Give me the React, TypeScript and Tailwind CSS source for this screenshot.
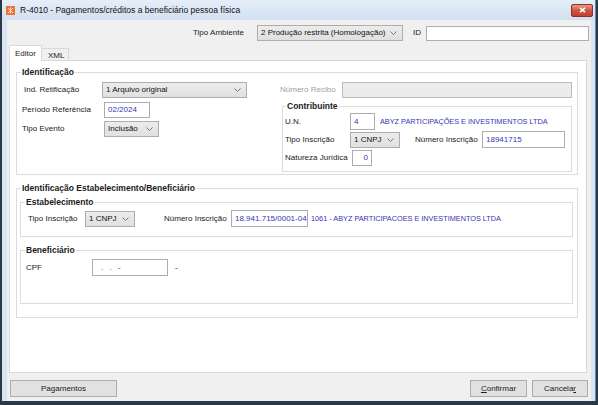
import React from 'react';

const FONT = "font-['Liberation_Sans',Arial,sans-serif]";

function Chevron() {
  return (
    <svg width="7" height="4" viewBox="0 0 7 4" className="shrink-0">
      <path d="M0.5 0.5 L3.5 3.5 L6.5 0.5" fill="none" stroke="#6b6b6b" strokeWidth="0.9" />
    </svg>
  );
}

function Select({ className, text }: { className: string; text: string }) {
  return (
    <div
      className={`flex shrink-0 items-center justify-between border border-[#adadad] bg-gradient-to-b from-[#ececec] to-[#e0e0e0] pl-[3px] pr-[5px] text-[8px] leading-[10px] text-[#111] ${className}`}
    >
      <span className="whitespace-nowrap">{text}</span>
      <Chevron />
    </div>
  );
}

function Input({ className, text = '', right = false }: { className: string; text?: string; right?: boolean }) {
  return (
    <div
      className={`flex shrink-0 items-center border border-[#abadb3] bg-white px-[3px] text-[8px] leading-[10px] text-[#3535b5] ${right ? 'justify-end' : ''} ${className}`}
    >
      <span className="whitespace-nowrap">{text}</span>
    </div>
  );
}

function Label({ className, children, gray = false }: { className: string; children: React.ReactNode; gray?: boolean }) {
  return (
    <div className={`shrink-0 whitespace-nowrap text-[8px] leading-[10px] ${gray ? 'text-[#a0a0a0]' : 'text-[#1a1a1a]'} ${className}`}>
      {children}
    </div>
  );
}

function Group({ title, className, children }: { title: string; className: string; children: React.ReactNode }) {
  return (
    <fieldset className={`min-w-0 border border-[#dcdcdc] ${className}`}>
      <legend className="ml-[4px] px-[1px] text-[8.5px] font-bold leading-[10px] text-[#1a1a1a]">{title}</legend>
      {children}
    </fieldset>
  );
}

function Button({ className, children }: { className: string; children: React.ReactNode }) {
  return (
    <div
      className={`flex h-[17px] shrink-0 items-center justify-center border border-[#adadad] bg-[#e1e1e1] text-[8px] leading-[10px] text-[#1a1a1a] ${className}`}
    >
      {children}
    </div>
  );
}

export default function App() {
  return (
    <div className={`h-[405px] w-[598px] overflow-hidden bg-[#2b3846] pl-[2px] ${FONT}`}>
      <div className="flex h-[401px] w-[594px] flex-col border-r border-[#5b86bf] bg-[#d9e5f3]">
        {/* Title bar */}
        <div className="flex h-[20px] shrink-0 items-center bg-gradient-to-b from-[#e6eef8] to-[#d2e0f1] pl-[4px] pr-[2px]">
          <div className="flex h-[9px] w-[9px] items-center justify-center bg-[#f0703a]">
            <svg width="7" height="7" viewBox="0 0 7 7">
              <path d="M1 1 L6 6 M6 1 L1 6 M3.5 0.5 L3.5 6.5" stroke="#ffe6d8" strokeWidth="0.9" />
            </svg>
          </div>
          <div className="ml-[5px] whitespace-nowrap text-[8.5px] leading-[10px] text-[#111]">
            R-4010 - Pagamentos/créditos a beneficiário pessoa física
          </div>
          <div className="ml-auto flex h-[13px] w-[22px] items-center justify-center rounded-[2px] border border-[#8b3327] bg-gradient-to-b from-[#e59a8b] via-[#d0533f] to-[#c0402d]">
            <svg width="7" height="6" viewBox="0 0 7 6">
              <path d="M1 0.8 L6 5.2 M6 0.8 L1 5.2" stroke="#fff" strokeWidth="1.6" />
            </svg>
          </div>
        </div>

        {/* Client area */}
        <div className="mx-[5px] flex h-[381px] w-[584px] flex-col bg-[#f0f0f0]">
          {/* Top row */}
          <div className="mt-[5px] flex h-[16px] items-center pl-[186px]">
            <Label className="w-[64px]">Tipo Ambiente</Label>
            <Select className="h-[16px] w-[146px]" text="2 Produção restrita (Homologação)" />
            <Label className="ml-[10px] w-[13px]">ID</Label>
            <Input className="h-[15px] w-[163px]" />
          </div>

          {/* Tabs */}
          <div className="mt-[4px] -mb-px ml-[2px] flex h-[16px] items-end">
            <div className="relative z-10 flex h-[16px] w-[33px] items-start border border-b-0 border-[#d9d9d9] bg-white pl-[5px] pt-[3px] text-[8px] leading-[10px] text-[#1a1a1a]">
              Editor
            </div>
            <div className="flex h-[13px] w-[27px] items-start border border-l-0 border-[#d9d9d9] bg-[#f0f0f0] pl-[6px] pt-[2px] text-[8px] leading-[10px] text-[#1a1a1a]">
              XML
            </div>
          </div>

          {/* Panel */}
          <div className="ml-[2px] h-[313px] w-[578px] border border-[#d9d9d9] bg-white pl-[6px] pt-[6px]">
            <Group title="Identificação" className="w-[562px]">
              <div className="pb-[2px] pl-[5px] pt-[5px]">
                <div className="flex h-[16px] items-center">
                  <Label className="ml-[2px] w-[78px]">Ind. Retificação</Label>
                  <Select className="h-[16px] w-[145px]" text="1 Arquivo original" />
                  <Label gray className="ml-[33px] w-[62px]">
                    Número Recibo
                  </Label>
                  <div className="h-[16px] w-[230px] shrink-0 border border-[#bcbcbc] bg-[#ececec]" />
                </div>
                <div className="flex items-start">
                  <div className="w-[260px] shrink-0 pt-[4px]">
                    <div className="flex h-[16px] items-center">
                      <Label className="w-[82px]">Período Referência</Label>
                      <Input className="h-[16px] w-[46px]" text="02/2024" />
                    </div>
                    <div className="mt-[3px] flex h-[16px] items-center">
                      <Label className="w-[82px]">Tipo Evento</Label>
                      <Select className="h-[16px] w-[55px]" text="Inclusão" />
                    </div>
                  </div>
                  <fieldset className="mt-[3px] w-[290px] min-w-0 border border-[#dcdcdc]">
                    <legend className="ml-[3px] px-[1px] text-[8.5px] font-bold leading-[10px] text-[#1a1a1a]">Contribuinte</legend>
                    <div className="pb-[5px] pl-[2px] pt-[2px]">
                      <div className="flex h-[17px] items-center">
                        <Label className="w-[65px]">U.N.</Label>
                        <Input className="h-[17px] w-[25px]" text="4" />
                        <div className="ml-[5px] whitespace-nowrap text-[7.3px] leading-[10px] text-[#3535b5]">
                          ABYZ PARTICIPAÇÕES E INVESTIMENTOS LTDA
                        </div>
                      </div>
                      <div className="mt-[1px] flex h-[17px] items-center">
                        <Label className="w-[65px]">Tipo Inscrição</Label>
                        <Select className="h-[16px] w-[50px]" text="1 CNPJ" />
                        <Label className="ml-[15px] w-[67px]">Número Inscrição</Label>
                        <Input className="h-[17px] w-[83px]" text="18941715" />
                      </div>
                      <div className="mt-[1px] flex h-[17px] items-center">
                        <Label className="w-[67px]">Natureza Jurídica</Label>
                        <Input className="h-[16px] w-[20px]" text="0" right />
                      </div>
                    </div>
                  </fieldset>
                </div>
              </div>
            </Group>

            <Group title="Identificação Estabelecimento/Beneficiário" className="mt-[8px] w-[562px]">
              <div className="pb-[13px] pl-[3px]">
                <Group title="Estabelecimento" className="mt-[4px] w-[553px]">
                  <div className="pb-[9px] pl-[7px] pt-[3px]">
                    <div className="flex h-[17px] items-center">
                      <Label className="w-[57px]">Tipo Inscrição</Label>
                      <Select className="h-[16px] w-[50px]" text="1 CNPJ" />
                      <Label className="ml-[29px] w-[67px]">Número Inscrição</Label>
                      <Input className="h-[17px] w-[77px]" text="18.941.715/0001-04" />
                      <div className="ml-[3px] whitespace-nowrap text-[7.3px] leading-[10px] text-[#3535b5]">
                        1061 - ABYZ PARTICIPACOES E INVESTIMENTOS LTDA
                      </div>
                    </div>
                  </div>
                </Group>
                <Group title="Beneficiário" className="mt-[8px] w-[553px]">
                  <div className="pb-[27px] pl-[5px] pt-[4px]">
                    <div className="flex h-[17px] items-center">
                      <Label className="w-[66px]">CPF</Label>
                      <Input className="h-[17px] w-[76px] pl-[8px] tracking-[2px]" text=".  .  -" />
                      <Label className="ml-[7px] w-[6px]">-</Label>
                    </div>
                  </div>
                </Group>
              </div>
            </Group>
          </div>

          {/* Bottom buttons */}
          <div className="mt-[7px] flex items-center">
            <Button className="ml-[3px] w-[107px]">Pagamentos</Button>
            <Button className="ml-auto w-[57px]">
              <span className="underline">C</span>onfirmar
            </Button>
            <Button className="ml-[5px] mr-[3px] w-[56px]">
              Cancela<span className="underline">r</span>
            </Button>
          </div>
        </div>
      </div>
    </div>
  );
}
